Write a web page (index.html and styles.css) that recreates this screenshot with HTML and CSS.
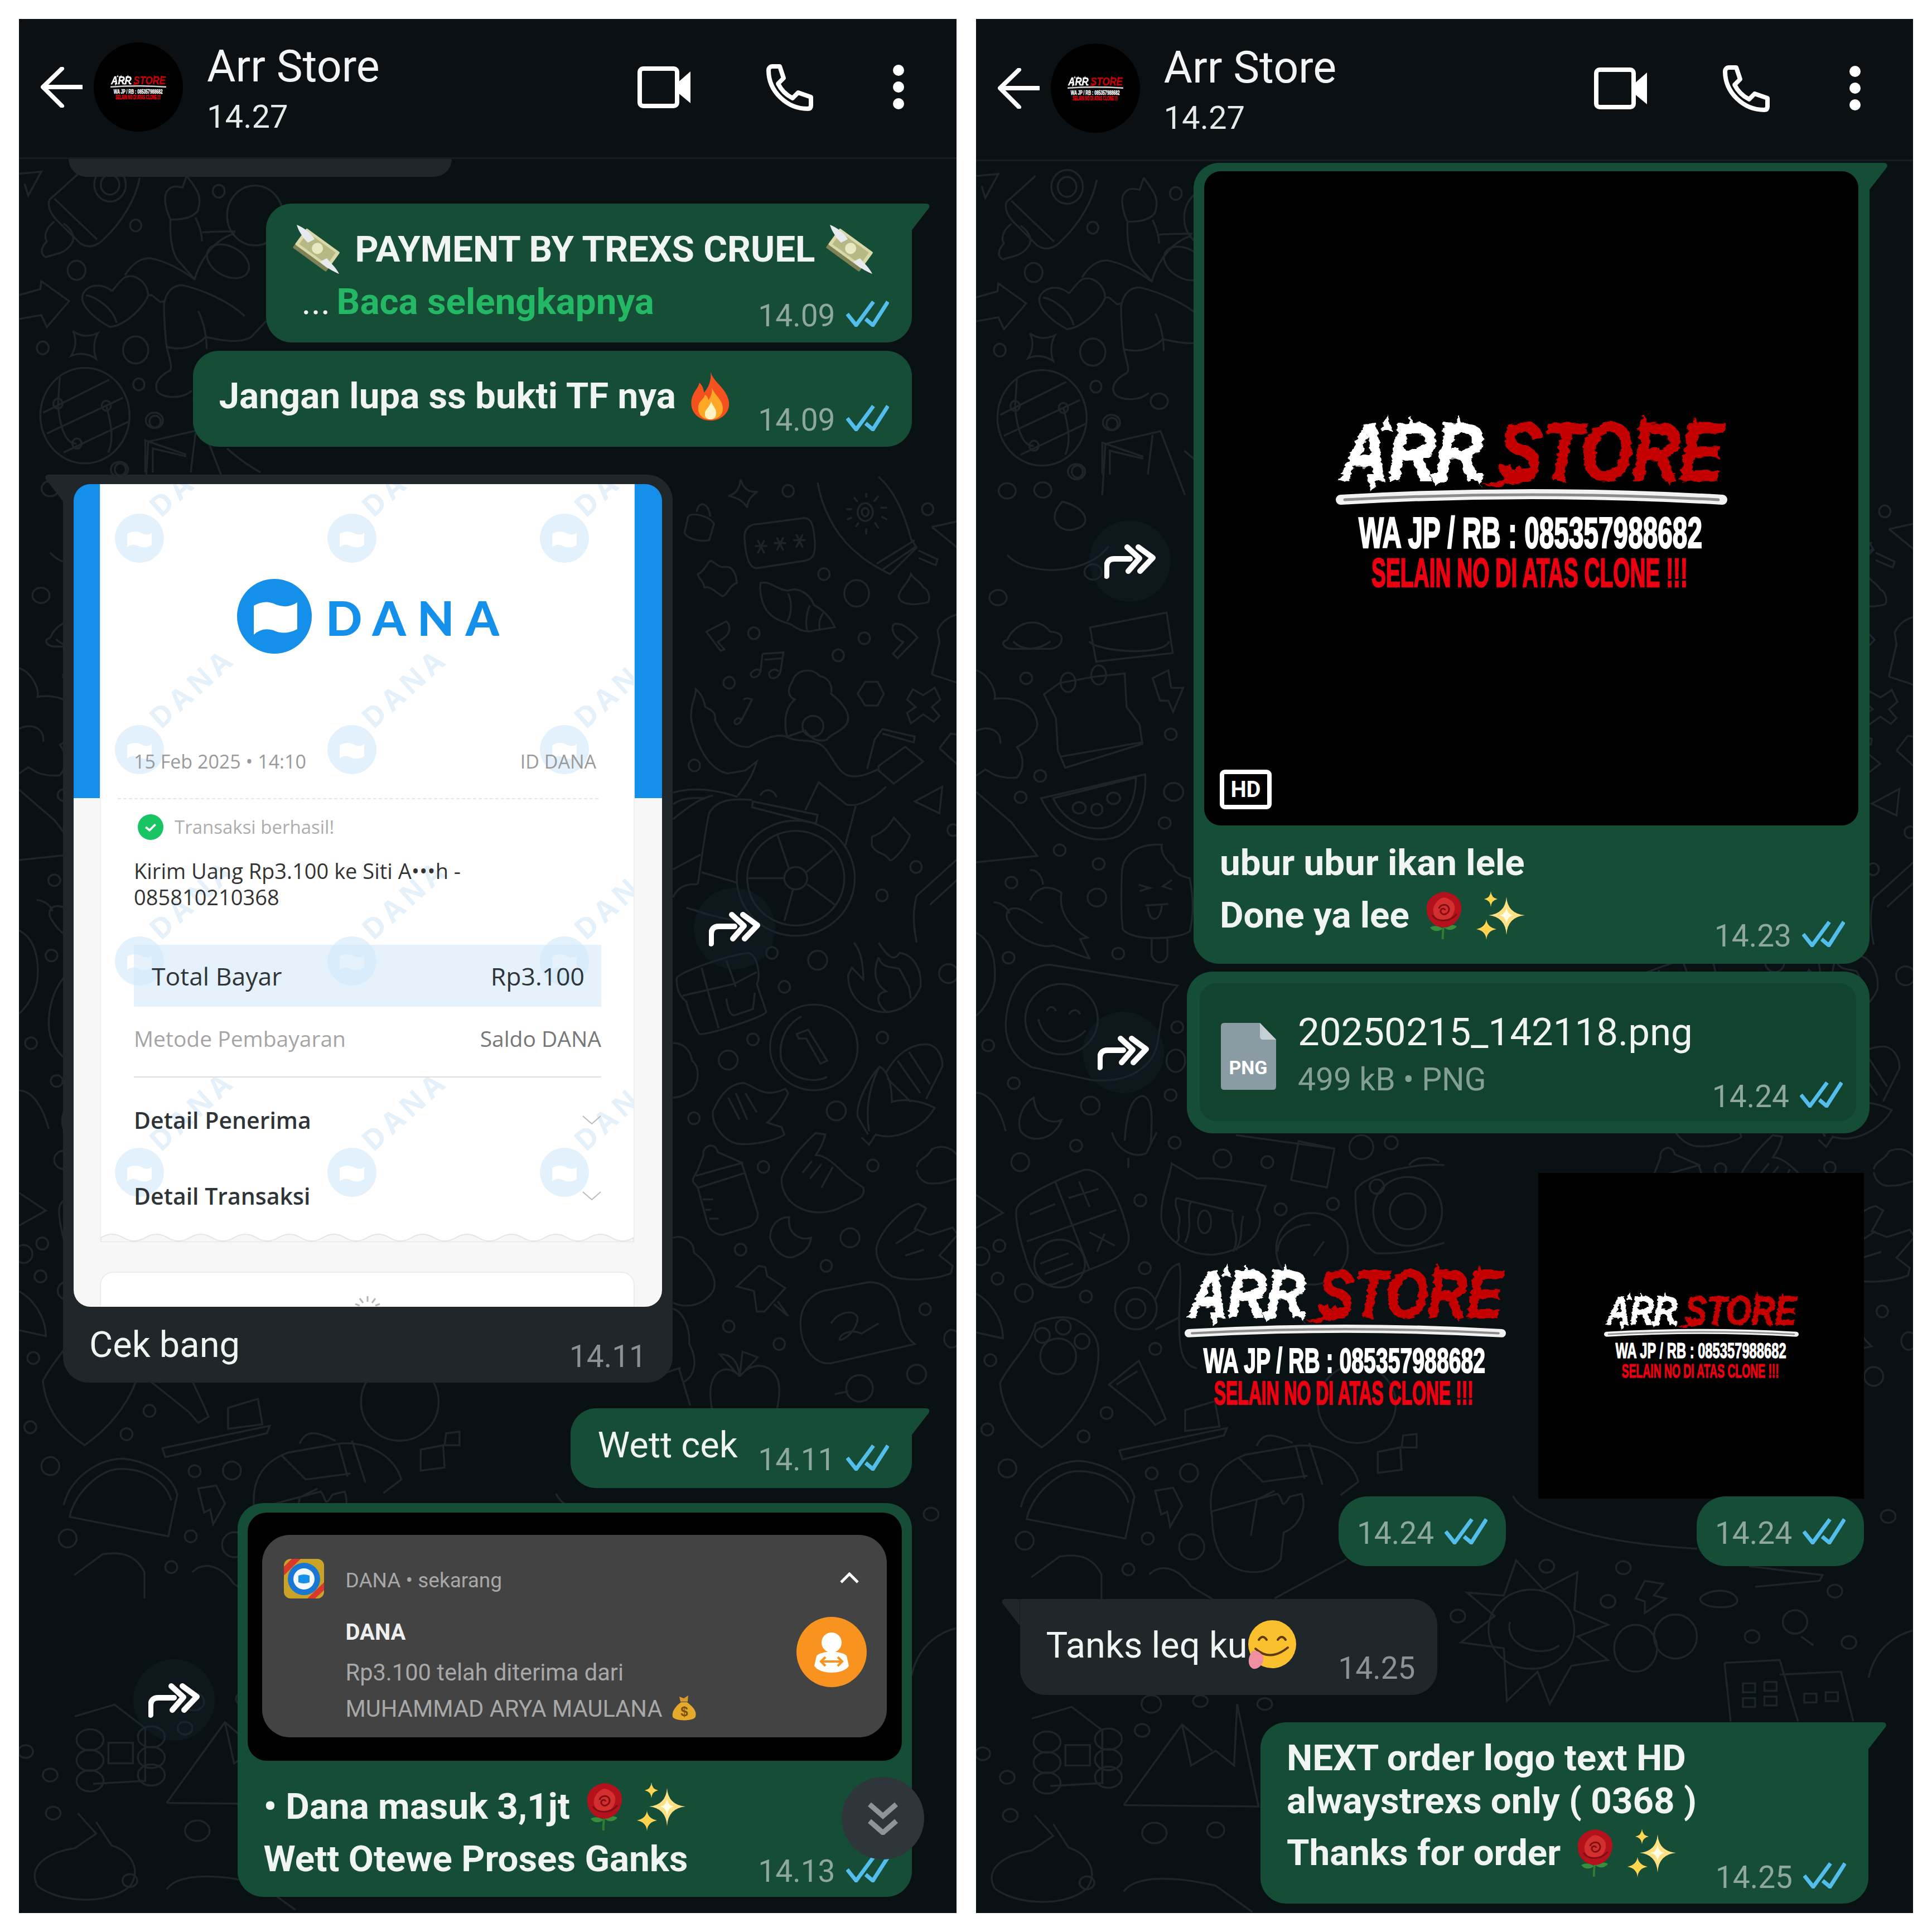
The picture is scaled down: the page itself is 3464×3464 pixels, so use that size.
FILE: index.html
```html
<!DOCTYPE html>
<html lang="en">
<head>
    <meta charset="UTF-8">
    <title>Arr Store - chat</title>
    <link rel="stylesheet" href="styles.css">
</head>
<body>
    <!-- Shared drawings -->
    <svg class="defs" aria-hidden="true">
        <defs>
            <filter id="rough" x="-5%" y="-10%" width="110%" height="120%">
                <feTurbulence type="fractalNoise" baseFrequency="0.05 0.12" numOctaves="2" seed="4"/>
                <feDisplacementMap in="SourceGraphic" scale="13"/>
            </filter>
            <symbol id="arr-logo" viewBox="0 0 702 325">
                <g filter="url(#rough)">
                    <text x="9" y="122" class="lg-white" textLength="255" lengthAdjust="spacingAndGlyphs">ARR</text>
                    <text x="292" y="122" class="lg-red" textLength="403" lengthAdjust="spacingAndGlyphs">STORE</text>
                    <path fill="#fff" stroke="none" d="M82 34L92 3 102 34ZM124 34L134 6 144 34ZM210 34L220 4 230 34ZM54 110L64 145 76 110ZM168 110L179 133 190 110ZM246 110L261 133 264 110Z"/>
                    <path fill="#c40000" stroke="none" d="M542 34L552 2 562 34ZM634 34L644 8 654 34ZM588 110L599 132 610 110ZM262 130C290 128 310 118 330 96L350 122C320 132 290 136 262 130Z"/>
                </g>
                <path d="M9 157Q351 137 693 157" fill="none" stroke="#f2f2f2" stroke-width="18" stroke-linecap="round"/>
                <path d="M16 157Q351 139 686 157" fill="none" stroke="#8c8c8c" stroke-width="5" stroke-linecap="round"/>
                <text x="41" y="243" class="lg-line" textLength="616" lengthAdjust="spacingAndGlyphs">WA JP / RB : 085357988682</text>
                <text x="64" y="313" class="lg-clone" textLength="567" lengthAdjust="spacingAndGlyphs">SELAIN NO DI ATAS CLONE !!!</text>
            </symbol>
            <symbol id="checks" viewBox="0 0 77 47">
                <path d="M2 24L18 44 49 2M35 33L48 44 75 2" fill="none" stroke="#53bdeb" stroke-width="7"/>
            </symbol>
            <symbol id="share" viewBox="0 0 92 63">
                <path d="M4 58V42Q4 27 18 27H46M41 6L63 26 43 49M61 6L87 25 64 49" fill="none" stroke="#fff" stroke-width="10" stroke-linecap="round" stroke-linejoin="round"/>
            </symbol>
            <symbol id="back" viewBox="0 0 75 73">
                <path d="M73 36H5M38 3L4 36 38 70" fill="none" stroke="#fff" stroke-width="8" stroke-linecap="round" stroke-linejoin="round"/>
            </symbol>
            <symbol id="video" viewBox="0 0 95 75">
                <rect x="4" y="4" width="67" height="67" rx="6" fill="none" stroke="#fff" stroke-width="8"/>
                <path d="M71 30L95 9V66L71 46Z" fill="#fff"/>
            </symbol>
            <symbol id="phone" viewBox="0 0 85 85">
                <path d="M5 12C5 50 38 81 75 81 79 81 81 79 81 75V60L58 52 48 62C36 56 28 48 22 36L32 26 25 5H12C8 5 5 8 5 12Z" fill="none" stroke="#fff" stroke-width="8" stroke-linejoin="round"/>
            </symbol>
            <symbol id="dots" viewBox="0 0 22 80">
                <circle cx="11" cy="10" r="10" fill="#fff"/><circle cx="11" cy="40" r="10" fill="#fff"/><circle cx="11" cy="70" r="10" fill="#fff"/>
            </symbol>
            <symbol id="money" viewBox="0 0 93 88">
                <g transform="rotate(36 46 44)">
                    <rect x="9" y="31" width="74" height="36" rx="2" fill="#7f8256"/>
                    <rect x="9" y="24" width="74" height="36" rx="2" fill="#d8d8a8"/>
                    <rect x="15" y="29" width="62" height="26" fill="#b7b984"/>
                    <circle cx="46" cy="42" r="10" fill="#e8e8c2"/>
                </g>
                <path d="M10 0C20 4 36 14 42 26L30 32 24 26C18 18 12 8 10 0Z" fill="#e6eaef"/>
                <path d="M86 88C80 76 72 70 64 60L52 66C58 74 76 84 86 88Z" fill="#e6eaef"/>
            </symbol>
            <symbol id="fire" viewBox="0 0 80 88">
                <path d="M40 0C44 18 66 28 72 50 78 72 60 88 40 88 18 88 2 72 6 50 9 36 18 30 20 20 26 26 28 32 28 38 36 30 42 16 40 0Z" fill="#f4511e"/>
                <path d="M42 28C46 42 62 50 62 66 62 80 52 86 40 86 26 86 16 78 18 62 20 52 28 50 30 42 34 44 36 48 36 52 40 46 44 38 42 28Z" fill="#ffa726"/>
                <path d="M41 54C44 62 50 66 50 74 50 82 46 86 40 86 33 86 29 82 30 74 31 68 38 64 41 54Z" fill="#fff3c4"/>
            </symbol>
            <symbol id="rose" viewBox="0 0 74 85">
                <path d="M37 56C36 66 34 76 35 85" fill="none" stroke="#2e7d32" stroke-width="4"/>
                <path d="M35 66C28 60 18 60 12 64 18 72 28 72 35 66ZM37 64C44 58 54 58 60 62 54 70 44 70 37 64Z" fill="#388e3c"/>
                <path d="M37 0C54 2 70 12 68 32 66 52 50 64 37 64 22 64 6 52 6 32 4 14 20 2 37 0Z" fill="#b3121d"/>
                <path d="M37 10C48 12 58 20 56 32 54 44 46 52 36 52 26 52 16 44 18 30 20 20 28 12 37 10Z" fill="#d32f2f"/>
                <path d="M28 30C30 22 44 20 46 30 47 40 34 44 31 36 30 30 38 28 39 33M16 42C24 54 46 56 60 40" fill="none" stroke="#7f0d14" stroke-width="3"/>
            </symbol>
            <symbol id="sparkles" viewBox="0 0 89 87">
                <path d="M56 10Q58 40 89 43 58 46 56 78 54 46 24 43 54 40 56 10Z" fill="#ffe082"/>
                <path d="M56 28Q57 42 70 43 57 44 56 60 55 44 42 43 55 42 56 28Z" fill="#fffde7"/>
                <path d="M28 0Q29 12 40 14 29 16 28 28 27 16 16 14 27 12 28 0Z" fill="#ffd54f"/>
                <path d="M20 50Q21 64 38 68 21 71 20 87 19 71 2 68 19 64 20 50Z" fill="#ffd54f"/>
            </symbol>
            <symbol id="yum" viewBox="0 0 92 92">
                <circle cx="48" cy="44" r="43" fill="#fbc02d"/>
                <path d="M24 36Q31 26 38 36M58 36Q65 26 72 36" fill="none" stroke="#5d3a12" stroke-width="4" stroke-linecap="round"/>
                <path d="M18 52Q44 76 76 50" fill="none" stroke="#5d3a12" stroke-width="4" stroke-linecap="round"/>
                <path d="M10 60C14 52 26 56 32 66 34 78 24 90 14 88 4 84 4 70 10 60Z" fill="#ef8fa0"/>
            </symbol>
            <symbol id="bag" viewBox="0 0 46 47">
                <path d="M17 12C6 20 0 30 2 38 4 46 40 47 43 38 46 28 38 20 28 12Z" fill="#e5a92b"/>
                <path d="M16 11L14 2 22 5 30 0 29 11Z" fill="#d9982a"/>
                <text x="23" y="37" class="bag-sign">$</text>
            </symbol>
        </defs>
    </svg>

    <!-- Left phone -->
    <section class="phone-shot">
        <header class="top">
            <svg class="ic-back"><use href="#back"/></svg>
            <div class="avatar"><svg class="avatar-logo"><use href="#arr-logo"/></svg></div>
            <div class="who">
                <div class="who-name">Arr Store</div>
                <div class="who-time">14.27</div>
            </div>
            <svg class="ic-video"><use href="#video"/></svg>
            <svg class="ic-phone"><use href="#phone"/></svg>
            <svg class="ic-dots"><use href="#dots"/></svg>
        </header>
        <div class="chat chat-left">
            <svg class="wall" viewBox="34 285 1681 3145" preserveAspectRatio="none">
                <g id="wall-art">
                    <!-- top left corner -->
                    <g transform="translate(34 290) scale(.3333 .357)">
                        <path d="M0 60L120 50 50 170 30 110M320 60L165 190C150 220 170 260 200 290L330 410C380 440 420 420 450 395 560 300 630 180 650 80M190 185L420 390"/>
                        <circle cx="490" cy="115" r="85"/><circle cx="490" cy="115" r="50"/>
                        <path d="M190 300C150 330 130 370 150 400 120 430 110 460 145 480 190 460 250 470 290 400 300 360 270 330 240 310"/>
                        <circle cx="628" cy="320" r="30"/><circle cx="310" cy="545" r="48"/><circle cx="128" cy="935" r="32"/><circle cx="628" cy="945" r="68"/><circle cx="645" cy="1118" r="30"/><circle cx="732" cy="1305" r="30"/><circle cx="1075" cy="148" r="32"/><circle cx="545" cy="1545" r="30"/>
                        <path d="M0 670L115 640 120 600 270 700 150 830 120 770 0 790"/>
                        <path d="M290 850C330 880 380 880 425 860 400 900 400 950 415 990 370 960 320 960 280 975 310 930 310 890 290 850Z"/>
                        <circle cx="355" cy="1275" r="240"/><circle cx="210" cy="1215" r="25"/><circle cx="470" cy="1225" r="25"/><circle cx="312" cy="1415" r="25"/>
                        <path d="M130 1260L485 1095M150 1365L560 1185M240 1460L590 1305M210 1215C220 1350 260 1420 310 1415M220 1080L210 1215M470 1225C500 1330 510 1400 480 1460"/>
                        <path d="M500 650C440 600 350 620 340 680 340 740 430 800 490 830 580 820 680 720 695 670 690 600 620 560 570 580 540 600 520 630 500 650M360 670C420 680 510 740 525 810M570 570C610 510 660 480 710 485 790 500 870 540 945 590 960 540 1020 400 1160 360M695 670L715 670 760 705 780 700M780 720C790 650 830 620 880 620 980 640 1130 700 1215 775M780 700C780 800 790 900 795 930 870 950 950 930 1005 880 1060 890 1180 920 1250 880L1330 800M965 750C990 800 1010 860 1010 940M795 930C810 990 830 1040 810 1050 750 1080 720 1120 750 1160 790 1190 880 1190 930 1150"/>
                        <path d="M815 290C790 240 780 190 790 160 810 120 840 120 880 130 900 80 900 60 910 80 960 140 990 180 960 250 920 290 860 290 815 290M815 290C810 400 830 480 870 510L945 590M950 280C970 320 985 360 985 400M985 355C1040 350 1100 350 1165 350"/>
                        <ellipse cx="1125" cy="500" rx="120" ry="75" transform="rotate(25 1125 500)"/>
                        <circle cx="1270" cy="270" r="150"/>
                        <path d="M680 1560L680 1400 900 1470M720 1560L720 1440 900 1480M950 1360C940 1450 930 1500 925 1560M1120 1440C1180 1490 1240 1530 1300 1560"/>
                    </g>
                    <!-- left column, middle -->
                    <g transform="translate(24 -4) scale(1.0995 .7653)">
                        <path d="M220 1040L310 1010 350 1160M220 1040L215 1160M150 1175C120 1220 150 1250 170 1240 200 1230 190 1190 150 1175M60 1300C90 1350 190 1350 225 1280M195 1470L320 1435 330 1530 205 1550ZM60 1500C70 1460 110 1440 130 1480 160 1480 150 1520 130 1520H70C50 1520 50 1500 60 1500"/>
                        <ellipse cx="60" cy="1150" rx="14" ry="18"/><ellipse cx="118" cy="1148" rx="14" ry="18"/><ellipse cx="173" cy="1105" rx="14" ry="18"/><ellipse cx="230" cy="990" rx="14" ry="18"/><ellipse cx="308" cy="940" rx="14" ry="18"/><ellipse cx="200" cy="1340" rx="14" ry="18"/><ellipse cx="45" cy="1400" rx="14" ry="18"/>
                    </g>
                    <!-- left column, lower -->
                    <g transform="translate(34 1146) scale(.3333 .574)">
                        <path d="M365 165L450 130 640 110 800 100 810 205 880 260 895 320 480 395 440 340 430 240ZM455 360L895 315"/>
                        <ellipse cx="495" cy="128" rx="40" ry="30"/><ellipse cx="660" cy="105" rx="40" ry="30"/>
                        <path d="M950 115L1035 90 1050 145 1115 145 1060 220 1035 185 990 185Z"/>
                        <ellipse cx="270" cy="115" rx="32" ry="18"/><ellipse cx="1048" cy="290" rx="32" ry="18"/><ellipse cx="345" cy="420" rx="32" ry="18"/><ellipse cx="240" cy="487" rx="32" ry="18"/><ellipse cx="1063" cy="470" rx="52" ry="28"/><ellipse cx="1015" cy="567" rx="32" ry="18"/><ellipse cx="450" cy="652" rx="32" ry="18"/><ellipse cx="660" cy="695" rx="32" ry="18"/><ellipse cx="190" cy="753" rx="32" ry="18"/><ellipse cx="650" cy="800" rx="50" ry="28"/><ellipse cx="175" cy="988" rx="32" ry="18"/><ellipse cx="765" cy="975" rx="32" ry="18"/><ellipse cx="1083" cy="1205" rx="32" ry="18"/><ellipse cx="65" cy="1262" rx="32" ry="18"/><ellipse cx="1075" cy="1310" rx="50" ry="35"/><ellipse cx="203" cy="1380" rx="32" ry="18"/><ellipse cx="1047" cy="1417" rx="32" ry="18"/><ellipse cx="615" cy="1450" rx="50" ry="28"/>
                        <path d="M350 490L910 415C920 490 870 580 760 610 610 640 430 590 350 490ZM415 490L860 425C860 500 810 550 730 575 620 600 480 570 415 490Z"/>
                        <ellipse cx="555" cy="520" rx="35" ry="18"/><ellipse cx="650" cy="525" rx="30" ry="18"/><ellipse cx="740" cy="490" rx="35" ry="18"/>
                        <path d="M785 720C790 670 860 630 1000 635 990 660 1030 690 1060 700 1070 730 1120 735 1150 740 1170 800 1170 860 1150 905 1100 930 850 940 790 900 780 860 780 780 785 720ZM945 930V980C960 1010 1020 1010 1030 980V925M875 760L935 770 880 780M1055 745L1005 765 1055 775M910 825L1035 820M925 830C930 880 990 880 1000 825"/>
                        <path d="M290 810C310 780 370 750 460 785 440 850 520 900 600 925L560 930 610 990C540 980 470 960 420 950 340 960 230 930 180 880 140 850 180 820 250 840 290 850 340 880 360 880M290 715C330 710 360 740 360 760M95 815C130 815 170 830 180 850"/>
                        <path d="M160 1200C160 1100 260 1010 400 1010L1085 1075 1010 1130 975 1260C940 1340 800 1380 620 1370L300 1330C200 1300 160 1250 160 1200Z"/>
                        <ellipse cx="460" cy="1180" rx="195" ry="110"/>
                        <path d="M335 1180C370 1260 500 1270 590 1215M380 1155C395 1135 420 1140 430 1155M500 1165C520 1145 550 1150 560 1165"/>
                        <path d="M310 1425C240 1450 220 1500 240 1530 290 1570 420 1560 460 1495 400 1510 320 1490 310 1425ZM800 1560C810 1470 840 1420 900 1420 950 1430 950 1480 940 1568"/>
                        <path d="M0 90C60 100 110 150 100 180 190 170 320 190 330 260 320 300 250 320 220 330 260 360 260 400 220 425 170 430 100 420 80 410L50 400 0 420M0 470L190 565 330 670 0 690M0 280C70 260 140 280 130 320M0 910C70 930 110 980 100 1060 90 1110 40 1150 0 1170M0 1410C70 1410 130 1460 160 1530M200 0C250 30 330 30 400 0M610 0C640 30 1000 50 1040 0"/>
                    </g>
                    <!-- right column, upper -->
                    <g transform="translate(1190 860) scale(.3413 .5293)">
                        <path d="M340 55C380 50 400 30 405 0 420 30 450 45 495 40 460 55 440 75 440 95 420 70 380 60 340 55Z"/>
                        <ellipse cx="655" cy="38" rx="30" ry="20"/><ellipse cx="1388" cy="100" rx="30" ry="20"/><ellipse cx="843" cy="320" rx="30" ry="20"/><ellipse cx="1015" cy="385" rx="65" ry="45"/><ellipse cx="475" cy="520" rx="30" ry="20"/><ellipse cx="1055" cy="537" rx="30" ry="20"/><ellipse cx="918" cy="595" rx="30" ry="20"/><ellipse cx="345" cy="688" rx="30" ry="20"/><ellipse cx="162" cy="968" rx="30" ry="20"/><ellipse cx="1148" cy="1408" rx="30" ry="20"/><ellipse cx="1327" cy="1312" rx="30" ry="20"/><ellipse cx="1522" cy="1187" rx="30" ry="20"/>
                        <path d="M110 180L130 125C140 110 240 120 265 150L240 205C200 210 130 205 110 180ZM175 110C180 70 240 75 245 125"/>
                        <path d="M425 190C430 160 460 150 500 150L740 130C780 130 790 160 795 210 800 260 780 270 740 275L490 300C450 300 430 260 425 190ZM480 225H545M495 205L530 250M530 205L495 250M580 215H645M595 195L630 240M630 195L595 240M682 205H747M697 185L732 230M732 185L697 230"/>
                        <path d="M180 320C220 310 230 275 250 275 280 285 290 300 330 295 370 295 385 330 385 350 340 360 340 390 310 395 280 385 250 360 215 365 210 340 185 340 180 320Z"/>
                        <path d="M510 350C560 340 610 380 660 375 720 360 780 400 790 425 840 440 880 470 900 500L800 510C750 520 710 510 670 490 620 480 560 470 530 430 510 400 505 370 510 350ZM655 385C680 420 670 460 650 480M770 425C750 450 745 490 755 510M840 450C820 470 815 490 820 505"/>
                        <path d="M810 10C830 90 900 190 1020 250 1070 280 1130 300 1190 320L1330 230 1300 200C1260 100 1200 30 1130 -10M1120 285L1320 205M1150 305L1330 225M1340 240L1440 270 1430 290 1340 265"/>
                        <ellipse cx="1060" cy="110" rx="40" ry="30"/><ellipse cx="1060" cy="110" rx="18" ry="14"/>
                        <path d="M960 100H990M1140 95H1175M1000 60L1020 75M1130 55L1105 75M1065 45V60M1065 165V185M1010 160L1025 145M1130 165L1110 145M965 135L990 128M1175 135L1145 125"/>
                        <path d="M1410 160L1553 140M1410 160L1553 235M1300 320C1290 350 1240 370 1235 395 1240 420 1300 430 1390 415 1405 400 1390 370 1365 365 1350 345 1320 340 1300 320Z"/>
                        <path d="M225 515L330 480C355 495 350 520 320 535L285 550 320 575 300 580ZM1210 490C1250 480 1300 510 1335 535L1230 605 1205 590 1260 550C1220 540 1190 510 1210 490Z"/>
                        <path d="M520 590L630 585 615 650C600 680 550 680 555 655 570 640 590 640 605 650M520 590L510 650C490 680 450 670 460 655 480 640 500 640 510 650M530 610L625 605M420 745C440 735 460 745 465 745L410 815C390 835 365 830 375 815 390 805 400 805 410 815"/>
                        <path d="M1020 725L1060 685H1125L1158 725 1125 765H1060ZM1280 745L1310 710 1365 730 1425 705 1455 745 1410 770 1450 800 1420 820 1365 795 1300 825 1280 790 1325 770Z"/>
                        <ellipse cx="695" cy="1350" rx="310" ry="195"/><ellipse cx="695" cy="1350" rx="255" ry="160"/><ellipse cx="695" cy="1350" rx="60" ry="38"/>
                        <path d="M600 1205L660 1320M890 1255L750 1330M445 1350L635 1350M755 1370L900 1440M680 1390L635 1495"/>
                        <path d="M145 810C140 760 170 740 170 710 190 720 210 740 220 770 250 780 280 790 270 815 320 880 380 910 450 905 520 880 590 860 640 870 700 890 760 880 800 890 860 900 880 950 930 985 970 1015 1040 1010 1130 980M145 810C170 900 240 985 340 995L430 985 490 955C470 1000 430 1040 390 1070"/>
                        <path d="M680 680C690 650 770 630 820 665 870 670 890 700 880 725 950 760 990 800 960 830 920 860 880 860 860 880 820 890 770 880 745 850L650 870C630 820 640 770 690 745 640 730 660 700 680 680Z"/>
                        <ellipse cx="785" cy="835" rx="55" ry="35"/>
                        <path d="M1070 980L1110 880 1150 845 1320 870 1315 890 1150 860M1130 970L1270 905 1365 955 1210 1030 1130 985ZM1170 1040C1090 1090 1010 1110 960 1100L815 1025 745 1120M1010 1105L955 1240"/>
                        <path d="M470 1090L810 1135 800 1165 465 1110ZM510 1070C520 1050 570 1040 595 1075M465 1085C380 1080 280 1080 240 1130 220 1180 200 1290 180 1370M200 1330L385 1365M50 1320L195 1270M50 1060C150 1040 280 1050 390 1075M50 1150C110 1120 180 1080 260 1070M50 1100C90 1080 150 1075 220 1080M50 1415C80 1370 140 1370 180 1370M120 1450C180 1460 240 1480 390 1495"/>
                        <path d="M1320 1090L1465 1040 1450 1130ZM1095 1210C1130 1200 1170 1190 1210 1145L1295 1205C1280 1240 1210 1290 1190 1290 1160 1260 1120 1270 1095 1240ZM1553 1280L1330 1410C1310 1460 1310 1500 1330 1568M1553 1350L1400 1440M1410 660L1450 550 1440 510C1470 470 1520 460 1553 455M1410 660L1553 690M1450 910L1510 860 1553 865M1450 910L1553 970"/>
                    </g>
                    <!-- right column, lower -->
                    <g transform="translate(1190 1690) scale(.3413 .5293)">
                        <path d="M70 120C80 100 350 40 450 35 500 50 510 120 490 140L540 235C530 250 260 310 190 310 170 300 130 230 120 200 80 180 65 150 70 120ZM200 85L240 180 290 290M330 60L380 150M100 180L370 140 490 100M330 190C340 240 360 250 380 245L470 225 480 170"/>
                        <ellipse cx="570" cy="35" rx="30" ry="20"/><ellipse cx="810" cy="60" rx="50" ry="32"/><ellipse cx="635" cy="150" rx="30" ry="20"/><ellipse cx="470" cy="328" rx="30" ry="20"/><ellipse cx="340" cy="398" rx="50" ry="32"/><ellipse cx="1150" cy="322" rx="30" ry="20"/><ellipse cx="908" cy="570" rx="50" ry="32"/><ellipse cx="160" cy="595" rx="30" ry="20"/><ellipse cx="1498" cy="105" rx="50" ry="32"/><ellipse cx="525" cy="760" rx="30" ry="20"/><ellipse cx="1100" cy="755" rx="30" ry="20"/><ellipse cx="980" cy="1000" rx="50" ry="32"/><ellipse cx="855" cy="1095" rx="30" ry="20"/><ellipse cx="405" cy="1040" rx="30" ry="20"/><ellipse cx="343" cy="1300" rx="30" ry="20"/><ellipse cx="608" cy="1360" rx="30" ry="20"/><ellipse cx="1375" cy="1242" rx="30" ry="20"/><ellipse cx="1330" cy="1462" rx="50" ry="32"/><ellipse cx="1515" cy="1342" rx="40" ry="30"/>
                        <path d="M1130 0C1170 40 1210 70 1240 35 1310 40 1360 90 1350 150 1320 200 1240 240 1150 235 1060 230 970 190 970 110L990 85 1050 125C1050 80 1040 30 1000 0M1130 50C1150 90 1200 80 1240 90L1290 150 1300 190M1130 50C1100 100 1110 140 1170 165 1120 170 1110 200 1170 235"/>
                        <ellipse cx="790" cy="355" rx="230" ry="145"/>
                        <path d="M725 250C640 280 600 340 620 400 660 460 780 480 860 455M700 310L760 295 860 400 825 410 750 325 710 325Z"/>
                        <path d="M260 570C290 530 330 480 420 475 490 490 530 530 640 495L655 510C620 560 580 590 545 610L620 625 635 650C600 670 450 690 380 680 320 670 250 620 260 570ZM340 525L400 600M380 510L440 600M430 510L490 575"/>
                        <path d="M1040 660L1080 685 1115 650C1210 670 1350 640 1425 560 1340 530 1250 530 1200 540 1200 470 1170 430 1135 420 1080 460 1010 540 1020 590L1075 650M1170 440C1220 380 1300 340 1390 345 1440 350 1470 390 1465 420L1380 530M1230 400L1350 510M1290 370L1400 480M1175 460L1300 540M1135 420C1080 490 1060 560 1080 640"/>
                        <path d="M620 800C640 750 740 680 800 645L850 650C840 680 820 700 800 720 850 720 900 750 960 790L1050 830C1060 860 1030 870 950 890 880 920 780 920 720 900 650 880 620 840 620 800ZM730 780L780 740M770 800L830 750M830 830L890 760"/>
                        <path d="M1120 1030C1150 960 1280 890 1340 885L1380 900 1320 970 1400 990 1520 965 1545 990 1450 1060 1520 1095 1510 1120C1440 1140 1280 1150 1200 1130 1150 1110 1110 1070 1120 1030ZM1220 1020L1340 970M1270 1060L1370 1040"/>
                        <path d="M155 800L180 770 210 720C200 690 270 670 285 710L410 745 495 915C500 940 470 960 440 965L310 990C270 990 240 970 230 950L180 830 155 810ZM170 790L420 745M185 830L430 780M205 870H260M220 905H250M240 935H290"/>
                        <path d="M660 930C600 930 560 960 560 1000 580 1050 650 1080 700 1060 740 1050 770 1030 775 1000 720 1010 650 990 660 930ZM385 1165L500 1095 535 1100 545 1130 640 1170 530 1250 490 1250 475 1180ZM580 1225L655 1265 600 1215"/>
                        <path d="M720 1290C720 1230 780 1180 880 1175L1080 1150C1170 1150 1220 1190 1240 1260 1250 1310 1280 1340 1320 1360L880 1425C780 1430 720 1360 720 1290ZM880 1290C920 1250 1000 1240 1020 1270 1020 1310 950 1350 925 1345 930 1320 1000 1310 1040 1325L1130 1290"/>
                        <path d="M400 1470C350 1430 270 1440 250 1500 240 1530 250 1568 260 1600M400 1470C460 1420 560 1420 600 1480 620 1520 600 1570 590 1600M400 1470L295 1395C350 1395 390 1410 400 1470L415 1385 495 1405 400 1470M900 1530L970 1520"/>
                        <ellipse cx="1030" cy="1510" rx="70" ry="45"/>
                        <path d="M1330 760C1340 730 1390 730 1410 700 1470 680 1530 700 1553 730M1330 770C1340 810 1390 820 1430 815 1470 820 1510 800 1553 800M50 340C100 340 140 360 150 400 190 420 190 470 150 500 120 515 80 525 50 525M50 1000C100 990 160 1010 160 1050 240 1090 300 1150 250 1190 200 1230 120 1240 50 1220M50 1240C100 1250 140 1300 135 1360 180 1410 170 1470 100 1490M80 1440L140 1568M0 1460L90 1440"/>
                    </g>
                    <!-- bottom band -->
                    <g transform="translate(34 2026) scale(.5357)">
                        <circle cx="335" cy="45" r="20"/><circle cx="665" cy="35" r="20"/><circle cx="975" cy="100" r="20"/><circle cx="1390" cy="35" r="22"/><circle cx="148" cy="100" r="30"/><circle cx="825" cy="88" r="30"/><circle cx="1290" cy="50" r="40"/><circle cx="550" cy="228" r="20"/><circle cx="1195" cy="240" r="20"/><circle cx="1020" cy="258" r="20"/><circle cx="78" cy="380" r="20"/><circle cx="72" cy="490" r="20"/><circle cx="565" cy="455" r="20"/><circle cx="160" cy="538" r="30"/><circle cx="368" cy="550" r="20"/><circle cx="600" cy="725" r="20"/><circle cx="48" cy="763" r="20"/><circle cx="38" cy="995" r="20"/><circle cx="360" cy="1018" r="20"/><circle cx="437" cy="940" r="20"/><circle cx="105" cy="1125" r="30"/><circle cx="588" cy="1142" r="20"/><circle cx="713" cy="1140" r="30"/><circle cx="163" cy="1367" r="30"/><circle cx="575" cy="1360" r="20"/><circle cx="722" cy="1388" r="42"/><circle cx="510" cy="1463" r="20"/><circle cx="15" cy="415" r="30"/>
                        <path d="M135 260C140 210 350 125 370 125 430 130 480 210 510 340 520 390 480 420 430 440L280 500C230 530 190 490 170 430 150 370 130 300 135 260ZM265 165L380 460M170 365L470 260M180 275L265 240M345 165L380 250M310 220L410 190M380 335L465 380M430 340L405 400M215 440L310 405M230 475L325 440"/>
                        <ellipse cx="280" cy="440" rx="85" ry="80"/>
                        <path d="M655 105L740 155C800 150 920 170 970 180L940 260C980 330 900 400 790 410 700 410 620 350 620 280 620 210 650 150 655 105ZM670 220C660 260 690 270 680 310 670 340 690 350 670 370M720 230C700 280 730 300 700 370M860 270C850 320 890 340 860 400M895 280C880 320 900 340 870 395M670 220L860 265"/>
                        <ellipse cx="765" cy="300" rx="22" ry="38"/>
                        <path d="M1270 200C1280 150 1450 100 1568 110M1270 200C1270 300 1290 380 1340 405 1420 410 1500 390 1568 370M1450 110C1470 80 1520 80 1550 100"/>
                        <circle cx="1445" cy="265" r="115"/><circle cx="1445" cy="265" r="60"/><circle cx="1342" cy="182" r="24"/>
                        <circle cx="1125" cy="390" r="120"/>
                        <path d="M1130 415L1165 365M1010 400C1010 350 1060 310 1120 310M455 0C470 60 530 90 570 70L605 0M510 85V120M1080 30L1200 55 1175 185 1055 160ZM870 10L1200 55"/>
                        <path d="M80 840C120 760 180 720 200 640 240 620 300 610 340 630 390 660 410 690 410 740 410 850 340 970 220 1055 150 1010 90 940 80 840Z"/>
                        <circle cx="275" cy="750" r="60"/><circle cx="222" cy="680" r="25"/><circle cx="292" cy="652" r="25"/><circle cx="355" cy="700" r="25"/>
                        <circle cx="535" cy="590" r="70"/><circle cx="535" cy="590" r="32"/>
                        <path d="M600 560C630 500 640 450 680 440 690 480 680 560 680 620L600 660M680 620C680 700 680 780 740 790"/>
                        <path d="M445 845L545 765 620 925 635 960 600 980 570 945ZM470 845L540 800M480 1065L840 990 830 1015 490 1095ZM700 930L800 900 815 985 700 1000Z"/>
                        <path d="M790 1290C770 1170 820 1110 900 1080L1070 1050C1180 1040 1260 1100 1280 1170L1220 1215M785 1270L1010 1210C1030 1230 1020 1270 1050 1220L1090 1210C1110 1260 1080 1320 1030 1340L1020 1430C980 1490 880 1480 840 1440 800 1400 790 1340 790 1280M880 1090L960 1170 1110 1150M940 1050C960 1000 1000 1010 1060 1040M1070 1050L1100 1160M1115 1040L1160 1180M920 1350L940 1230 1000 1200"/>
                        <circle cx="1275" cy="910" r="130"/>
                        <path d="M1345 1070L1420 1055 1425 1130 1345 1140ZM1430 1015L1475 1010 1475 1055 1425 1055Z"/>
                        <path d="M150 1255C170 1170 260 1100 350 1100 430 1110 510 1150 530 1220L500 1360 170 1295C180 1230 260 1140 330 1135 410 1130 490 1170 510 1240M600 1200L660 1190 690 1250 650 1320 640 1270 620 1280Z"/>
                        <path d="M580 1480C620 1440 680 1460 720 1520L800 1568M185 1490L280 1420C340 1410 390 1420 420 1480L420 1568M1000 1560L1240 1430M0 540C40 560 90 620 90 690L0 670M0 210L90 270 0 320"/>
                    </g>
                    <!-- bottom rows -->
                    <g transform="translate(24 2636) scale(1.0995 .5255)">
                        <path d="M100 840L165 800 215 880V1060L130 1070M250 1135L345 860 395 950M345 860L360 1000 400 950 430 1000 435 790 470 1140 250 1135M105 1170L135 1240 100 1290C60 1300 20 1350 40 1420 70 1470 150 1490 190 1420 210 1360 190 1300 160 1280L135 1200M250 1430C270 1370 340 1380 400 1410L460 1500"/>
                        <ellipse cx="125" cy="920" rx="22" ry="36"/><ellipse cx="125" cy="990" rx="22" ry="36"/><ellipse cx="125" cy="1060" rx="22" ry="36"/><ellipse cx="225" cy="910" rx="22" ry="36"/><ellipse cx="225" cy="980" rx="22" ry="36"/><ellipse cx="225" cy="1040" rx="22" ry="36"/>
                        <rect x="155" y="930" width="40" height="70"/>
                        <ellipse cx="295" cy="790" rx="16" ry="30"/><ellipse cx="375" cy="780" rx="12" ry="20"/><ellipse cx="480" cy="790" rx="12" ry="20"/><ellipse cx="280" cy="880" rx="12" ry="22"/><ellipse cx="20" cy="960" rx="12" ry="22"/><ellipse cx="60" cy="1040" rx="12" ry="22"/><ellipse cx="65" cy="1170" rx="12" ry="22"/><ellipse cx="300" cy="1230" rx="20" ry="35"/><ellipse cx="190" cy="1400" rx="12" ry="22"/><ellipse cx="400" cy="1220" rx="14" ry="26"/>
                        <path d="M890 300L870 420 810 410 855 490 800 580 870 600 875 780 925 680 945 790 980 660 1040 640 990 560 1040 520 985 470 990 340 935 400ZM880 510C870 590 930 640 960 590"/>
                        <ellipse cx="915" cy="535" rx="70" ry="135"/>
                        <ellipse cx="1085" cy="600" rx="35" ry="80"/><ellipse cx="1150" cy="560" rx="35" ry="75"/>
                        <path d="M1230 650L1320 640 1350 850M1230 650L1240 850M1320 690L1420 680 1440 850M1100 370L1130 380 1115 420 1135 430 1100 480 1100 440 1085 430ZM1190 430C1200 400 1240 390 1250 430 1260 470 1190 470 1190 430"/>
                        <rect x="1260" y="720" width="20" height="30"/><rect x="1295" y="715" width="20" height="30"/><rect x="1260" y="770" width="20" height="30"/><rect x="1295" y="765" width="20" height="30"/><rect x="1360" y="755" width="20" height="30"/><rect x="1395" y="750" width="20" height="30"/>
                        <ellipse cx="1345" cy="510" rx="20" ry="40"/>
                        <path d="M1355 560L1375 590M885 80C900 150 1000 240 1185 260M1270 320L1390 350 1385 370 1280 390"/>
                        <ellipse cx="795" cy="490" rx="12" ry="22"/><ellipse cx="1040" cy="440" rx="12" ry="22"/><ellipse cx="1275" cy="560" rx="12" ry="22"/><ellipse cx="1433" cy="580" rx="12" ry="22"/><ellipse cx="940" cy="320" rx="12" ry="22"/><ellipse cx="1065" cy="325" rx="12" ry="22"/><ellipse cx="1410" cy="405" rx="12" ry="22"/><ellipse cx="1497" cy="150" rx="12" ry="22"/>
                        <path d="M1465 700C1480 560 1537 540 1537 540"/>
                    </g>
                </g>
            </svg>

            <div class="stub"></div>

            <div class="row mt-48">
                <div class="msg out tail-r w-pay stack">
                    <div class="pay-body text">
                        <div class="line">
                            <svg class="emo-money"><use href="#money"/></svg>
                            <span class="pay-title">PAYMENT BY TREXS CRUEL</span>
                            <svg class="emo-money"><use href="#money"/></svg>
                        </div>
                        <div class="pay-more"><span class="dots-more">...</span> <span class="link">Baca selengkapnya</span></div>
                    </div>
                    <div class="meta"><span>14.09</span><svg class="check"><use href="#checks"/></svg></div>
                </div>
            </div>

            <div class="row mt-15">
                <div class="msg out w-tf stack">
                    <div class="tf-body text line">
                        <span>Jangan lupa ss bukti TF nya</span>
                        <svg class="emo-fire"><use href="#fire"/></svg>
                    </div>
                    <div class="meta"><span>14.09</span><svg class="check"><use href="#checks"/></svg></div>
                </div>
            </div>

            <div class="row row-start row-mid mt-50">
                <div class="msg in tail-l w-cek">
                    <div class="receipt">
                        <div class="rc-card">
                            <svg class="rc-marks">
                                <defs>
                                    <pattern id="dana-mark" x="-51" y="-83" width="381" height="379" patternUnits="userSpaceOnUse">
                                        <circle cx="120" cy="180" r="44" fill="#e2f1fc"/>
                                        <path d="M98 172Q112 164 126 172 136 176 142 170V192Q130 200 118 194 108 188 98 196Z" fill="#fff"/>
                                        <text x="158" y="145" class="rc-mark-text" transform="rotate(-42 158 145)">DANA</text>
                                    </pattern>
                                </defs>
                                <rect width="959" height="1359" fill="url(#dana-mark)"/>
                            </svg>
                            <svg class="rc-logo" viewBox="0 0 470 135">
                                <circle cx="67" cy="67" r="67" fill="#1590ea"/>
                                <path d="M30 48Q50 36 70 46 90 54 108 42V90Q85 102 65 92 45 86 30 100Z" fill="#fff"/>
                                <text x="159" y="102" class="rc-logo-text" textLength="311" lengthAdjust="spacing">DANA</text>
                            </svg>
                            <div class="rc-date"><span>15 Feb 2025 • 14:10</span><span>ID DANA</span></div>
                            <div class="rc-dash"></div>
                            <div class="rc-status">
                                <svg class="rc-ok" viewBox="0 0 48 48"><circle cx="24" cy="24" r="24" fill="#19c463"/><path d="M15 24L22 30 33 19" fill="none" stroke="#fff" stroke-width="4"/></svg>
                                <span>Transaksi berhasil!</span>
                            </div>
                            <div class="rc-title">Kirim Uang Rp3.100 ke Siti A•••h -<br>085810210368</div>
                            <div class="rc-total"><span>Total Bayar</span><span>Rp3.100</span></div>
                            <div class="rc-row rc-method"><span>Metode Pembayaran</span><span class="rc-method-val">Saldo DANA</span></div>
                            <div class="rc-rule"></div>
                            <div class="rc-row rc-detail">
                                <span>Detail Penerima</span>
                                <svg class="rc-chev" viewBox="0 0 34 18"><path d="M1 2L17 16 33 2" fill="none" stroke="#bbb" stroke-width="2"/></svg>
                            </div>
                            <div class="rc-row rc-detail rc-detail-b">
                                <span>Detail Transaksi</span>
                                <svg class="rc-chev" viewBox="0 0 34 18"><path d="M1 2L17 16 33 2" fill="none" stroke="#bbb" stroke-width="2"/></svg>
                            </div>
                            <svg class="rc-wave" viewBox="0 0 960 16" preserveAspectRatio="none">
                                <path d="M0 8q20-12 40 0t40 0t40 0t40 0t40 0t40 0t40 0t40 0t40 0t40 0t40 0t40 0t40 0t40 0t40 0t40 0t40 0t40 0t40 0t40 0t40 0t40 0t40 0t40 0V16H0Z" fill="#f7f7f7" stroke="#e4e4e4" stroke-width="2"/>
                            </svg>
                        </div>
                        <div class="rc-next">
                            <svg class="rc-spin" viewBox="0 0 48 22"><path d="M24 2V12M10 6L16 14M38 6L32 14M2 16L10 19M46 16L38 19" fill="none" stroke="#b5b5b5" stroke-width="3"/></svg>
                        </div>
                    </div>
                    <div class="foot-cek stack">
                        <div class="caption">Cek bang</div>
                        <div class="meta meta-in"><span>14.11</span></div>
                    </div>
                </div>
                <div class="share share-cek"><svg class="share-ic"><use href="#share"/></svg></div>
            </div>

            <div class="row mt-46">
                <div class="msg out tail-r w-wett stack">
                    <div class="caption wett-body">Wett cek</div>
                    <div class="meta"><span>14.11</span><svg class="check"><use href="#checks"/></svg></div>
                </div>
            </div>

            <div class="row row-mid mt-27">
                <div class="share share-dana"><svg class="share-ic"><use href="#share"/></svg></div>
                <div class="msg out w-dana">
                    <div class="shot">
                        <div class="notif">
                            <svg class="nf-app" viewBox="0 0 72 71">
                                <rect width="72" height="71" rx="12" fill="#c9a227"/>
                                <path d="M0 14L14 0H30L0 30ZM72 56L56 71H42L72 42Z" fill="#d8392b"/>
                                <circle cx="36" cy="36" r="29" fill="#1976d2"/>
                                <circle cx="36" cy="36" r="19" fill="#f3f8fc"/>
                                <path d="M26 30Q36 26 46 30V42Q36 46 26 42Z" fill="#1590ea"/>
                            </svg>
                            <div class="nf-text">
                                <div class="nf-head">DANA • sekarang</div>
                                <div class="nf-title">DANA</div>
                                <div class="nf-body">Rp3.100 telah diterima dari</div>
                                <div class="nf-body nf-line"><span>MUHAMMAD ARYA MAULANA</span><svg class="emo-bag"><use href="#bag"/></svg></div>
                            </div>
                            <div class="nf-side">
                                <svg class="nf-chev" viewBox="0 0 36 20"><path d="M3 18L18 3 33 18" fill="none" stroke="#fff" stroke-width="5"/></svg>
                                <svg class="nf-pic" viewBox="0 0 126 126">
                                    <circle cx="63" cy="63" r="63" fill="#f7931e"/>
                                    <circle cx="63" cy="46" r="18" fill="#fff"/>
                                    <path d="M36 70C44 60 82 60 90 70L94 88C84 104 42 104 32 88Z" fill="#fff"/>
                                    <path d="M44 80H82M52 72L44 80 52 88M74 72L82 80 74 88" fill="none" stroke="#f7931e" stroke-width="4"/>
                                </svg>
                            </div>
                        </div>
                    </div>
                    <div class="foot-dana stack">
                        <div class="text">
                            <div class="line"><span>• Dana masuk 3,1jt</span><svg class="emo-rose"><use href="#rose"/></svg><svg class="emo-spark"><use href="#sparkles"/></svg></div>
                            <div>Wett Otewe Proses Ganks</div>
                        </div>
                        <div class="meta"><span>14.13</span><svg class="check"><use href="#checks"/></svg></div>
                    </div>
                </div>
            </div>

            <div class="scroll-down">
                <svg viewBox="0 0 54 59"><path d="M3 4L27 25 51 4M3 34L27 55 51 34" fill="none" stroke="#8d959b" stroke-width="9"/></svg>
            </div>
        </div>
    </section>

    <!-- Right phone -->
    <section class="phone-shot">
        <header class="top top-tall">
            <svg class="ic-back"><use href="#back"/></svg>
            <div class="avatar"><svg class="avatar-logo"><use href="#arr-logo"/></svg></div>
            <div class="who">
                <div class="who-name">Arr Store</div>
                <div class="who-time">14.27</div>
            </div>
            <svg class="ic-video"><use href="#video"/></svg>
            <svg class="ic-phone"><use href="#phone"/></svg>
            <svg class="ic-dots"><use href="#dots"/></svg>
        </header>
        <div class="chat chat-right">
            <svg class="wall" viewBox="34 285 1681 3141" preserveAspectRatio="none"><use href="#wall-art"/></svg>

            <div class="row row-mid mt-3">
                <div class="share share-main"><svg class="share-ic"><use href="#share"/></svg></div>
                <div class="msg out tail-r w-main">
                    <div class="photo">
                        <svg class="photo-logo"><use href="#arr-logo"/></svg>
                        <div class="hd">HD</div>
                    </div>
                    <div class="foot-main stack">
                        <div class="text">
                            <div>ubur ubur ikan lele</div>
                            <div class="line"><span>Done ya lee</span><svg class="emo-rose"><use href="#rose"/></svg><svg class="emo-spark"><use href="#sparkles"/></svg></div>
                        </div>
                        <div class="meta"><span>14.23</span><svg class="check"><use href="#checks"/></svg></div>
                    </div>
                </div>
            </div>

            <div class="row row-mid mt-14">
                <div class="share share-file"><svg class="share-ic"><use href="#share"/></svg></div>
                <div class="msg out w-file">
                    <div class="file stack">
                        <div class="file-row">
                            <svg class="file-ic" viewBox="0 0 99 120">
                                <path d="M6 0H70L99 30V114Q99 120 93 120H6Q0 120 0 114V6Q0 0 6 0Z" fill="#8a9ba3"/>
                                <path d="M70 0L99 30H76Q70 30 70 24Z" fill="#c4ced3"/>
                                <text x="49" y="92" class="file-ic-text">PNG</text>
                            </svg>
                            <div>
                                <div class="file-name">20250215_142118.png</div>
                                <div class="file-sub">499 kB • PNG</div>
                            </div>
                        </div>
                        <div class="meta"><span>14.24</span><svg class="check"><use href="#checks"/></svg></div>
                    </div>
                </div>
            </div>

            <div class="stickers">
                <div class="sticker-col">
                    <div class="sticker"><svg class="sticker-logo"><use href="#arr-logo"/></svg></div>
                    <div class="pill"><div class="meta"><span>14.24</span><svg class="check"><use href="#checks"/></svg></div></div>
                </div>
                <div class="sticker-col">
                    <div class="sticker sticker-black"><svg class="sticker-logo-sm"><use href="#arr-logo"/></svg></div>
                    <div class="pill"><div class="meta"><span>14.24</span><svg class="check"><use href="#checks"/></svg></div></div>
                </div>
            </div>

            <div class="row row-start mt-59">
                <div class="msg in tail-l w-tanks stack">
                    <div class="caption line tanks-body"><span>Tanks leq ku</span><svg class="emo-yum"><use href="#yum"/></svg></div>
                    <div class="meta meta-in"><span>14.25</span></div>
                </div>
            </div>

            <div class="row mt-49">
                <div class="msg out tail-r w-next stack">
                    <div class="text next-body">
                        <div class="next-top">NEXT order logo text HD<br>alwaystrexs only ( 0368 )</div>
                        <div class="line"><span>Thanks for order</span><svg class="emo-rose"><use href="#rose"/></svg><svg class="emo-spark"><use href="#sparkles"/></svg></div>
                    </div>
                    <div class="meta"><span>14.25</span><svg class="check"><use href="#checks"/></svg></div>
                </div>
            </div>
        </div>
    </section>
</body>
</html>
```

FILE: styles.css
```css
/* General Styles */
body {
    margin: 0;
    width: 3464px;
    height: 3464px;
    box-sizing: border-box;
    padding: 34px;
    display: flex;
    gap: 35px;
    background: #fff;
    font-family: Roboto, "Liberation Sans", sans-serif;
    overflow: hidden;
}

.defs {
    position: absolute;
    width: 0;
    height: 0;
}

.phone-shot {
    width: 1681px;
    height: 3396px;
    display: flex;
    flex-direction: column;
    background: #0a1114;
}

/* Header */
.top {
    height: 251px;
    box-sizing: border-box;
    flex: none;
    display: flex;
    align-items: center;
    padding: 0 93px 4px 39px;
    background: #0b1014;
    border-bottom: 3px solid #171e22;
    color: #fff;
}

.top-tall {
    height: 255px;
}

.ic-back {
    width: 75px;
    height: 73px;
}

.avatar {
    width: 160px;
    height: 160px;
    margin-left: 20px;
    border-radius: 50%;
    background: #000;
    display: flex;
    align-items: center;
    justify-content: center;
}

.avatar-logo {
    width: 100px;
    height: 47px;
}

.who {
    flex: 1;
    margin-left: 43px;
}

.who-name {
    font-size: 79px;
    line-height: 90px;
    color: #f2f4f5;
}

.who-time {
    font-size: 58px;
    line-height: 60px;
    margin-top: 15px;
    color: #e6e9ea;
}

.ic-video {
    width: 95px;
    height: 75px;
}

.ic-phone {
    width: 85px;
    height: 85px;
    margin-left: 135px;
}

.ic-dots {
    width: 22px;
    height: 80px;
    margin-left: 142px;
}

/* Chat area */
.chat {
    position: relative;
    flex: 1;
    overflow: hidden;
    padding-right: 80px;
    padding-left: 79px;
}

.chat-right {
    padding-right: 78px;
}

.wall {
    position: absolute;
    left: 0;
    top: 0;
    width: 100%;
    height: 100%;
    fill: none;
    stroke: #1d252a;
    stroke-width: 3.5;
}

.wall * {
    vector-effect: non-scaling-stroke;
}

.row {
    position: relative;
    display: flex;
    justify-content: flex-end;
}

.row-start {
    justify-content: flex-start;
}

.row-mid {
    align-items: center;
}

.mt-3 { margin-top: 3px; }
.mt-14 { margin-top: 14px; }
.mt-15 { margin-top: 15px; }
.mt-27 { margin-top: 27px; }
.mt-46 { margin-top: 46px; }
.mt-48 { margin-top: 48px; }
.mt-49 { margin-top: 49px; }
.mt-50 { margin-top: 50px; }
.mt-59 { margin-top: 59px; }

.stub {
    position: relative;
    width: 687px;
    height: 32px;
    margin-left: 10px;
    background: #1f272b;
    border-radius: 0 0 46px 46px;
}

/* Bubbles */
.msg {
    position: relative;
    border-radius: 46px;
    color: #f0f4f2;
}

.out {
    background: #154d37;
}

.in {
    background: #1f272b;
}

.tail-r {
    border-top-right-radius: 0;
}

.tail-r::after {
    content: "";
    position: absolute;
    top: 0;
    left: 100%;
    width: 33px;
    height: 48px;
    background: inherit;
    clip-path: path("M0 0H25Q34 0 31 8L0 48Z");
}

.tail-l {
    border-top-left-radius: 0;
}

.tail-l::before {
    content: "";
    position: absolute;
    top: 0;
    right: 100%;
    width: 33px;
    height: 48px;
    background: inherit;
    clip-path: path("M33 0H8Q-1 0 2 8L33 48Z");
}

.stack {
    display: grid;
}

.stack > * {
    grid-area: 1 / 1;
}

.text {
    font-size: 65.5px;
    font-weight: 700;
    line-height: 94px;
}

.caption {
    font-size: 65px;
    line-height: 80px;
}

.line {
    display: flex;
    align-items: center;
}

.meta {
    display: flex;
    align-items: flex-end;
    justify-self: end;
    align-self: end;
    gap: 19px;
    margin: 0 41px 28px 0;
    font-size: 55px;
    line-height: 40px;
    color: #8fa89f;
}

.meta-in {
    color: #8b9296;
    margin: 0 28px 27px 0;
}

.check {
    width: 77px;
    height: 47px;
}

/* Emoji */
.emo-money {
    width: 93px;
    height: 88px;
    flex: none;
}

.emo-fire {
    width: 80px;
    height: 88px;
    margin-left: 22px;
}

.emo-rose {
    width: 74px;
    height: 85px;
    margin-left: 25px;
}

.emo-spark {
    width: 89px;
    height: 87px;
    margin-left: 19px;
}

.emo-yum {
    width: 92px;
    height: 92px;
    margin-left: -4px;
}

.emo-bag {
    width: 46px;
    height: 47px;
    margin-left: 16px;
}

.bag-sign {
    font: 700 24px "Liberation Sans", sans-serif;
    text-anchor: middle;
    fill: #7a4d10;
}

/* Payment message */
.w-pay {
    width: 1158px;
}

.pay-body {
    padding: 35px 0 26px 45px;
}

.pay-title {
    margin: 0 17px 0 22px;
}

.pay-more {
    padding-left: 19px;
}

.dots-more {
    font-weight: 400;
    margin-right: -5px;
}

.link {
    color: #25b864;
}

.w-tf {
    width: 1289px;
}

.tf-body {
    padding: 34px 0 44px 47px;
}

/* Receipt screenshot */
.w-cek {
    width: 1093px;
    box-sizing: border-box;
    padding: 17px 19px 0;
}

.receipt {
    height: 1475px;
    overflow: hidden;
    border-radius: 30px;
    padding: 0 49px 0 47px;
    background: linear-gradient(#1590ea, #1590ea) 0 0 / 100% 563px no-repeat #f7f7f7;
    font-family: "Open Sans", sans-serif;
}

.rc-card {
    position: relative;
    height: 1359px;
    padding-top: 170px;
    box-sizing: border-box;
    background: #fff;
    border-left: 2px solid #efefef;
    border-right: 2px solid #efefef;
    overflow: hidden;
}

.rc-marks {
    position: absolute;
    left: 0;
    top: 0;
    width: 959px;
    height: 1359px;
}

.rc-mark-text {
    font: 700 52px "Open Sans", sans-serif;
    letter-spacing: 8px;
    fill: #e4f1fb;
}

.rc-logo {
    position: relative;
    display: block;
    width: 470px;
    height: 135px;
    margin-left: 244px;
}

.rc-logo-text {
    font: 900 86px "Lato", sans-serif;
    fill: #1590ea;
}

.rc-date,
.rc-status,
.rc-title,
.rc-total,
.rc-row,
.rc-dash,
.rc-rule {
    position: relative;
}

.rc-date {
    display: flex;
    justify-content: space-between;
    margin: 172px 67px 0 59px;
    font-size: 34px;
    line-height: 40px;
    color: #9a9a9a;
}

.rc-dash {
    margin: 46px 63px 0 30px;
    border-top: 2px dashed #e6e6e6;
}

.rc-status {
    display: flex;
    align-items: center;
    margin: 27px 0 0 65px;
    font-size: 33px;
    line-height: 46px;
    color: #adadad;
}

.rc-ok {
    width: 48px;
    height: 46px;
    margin-right: 19px;
}

.rc-title {
    margin: 32px 0 0 59px;
    font-size: 38px;
    line-height: 47px;
    color: #333;
}

.rc-total {
    display: flex;
    align-items: center;
    justify-content: space-between;
    height: 111px;
    margin: 62px 58px 0 59px;
    padding: 0 30px 0 32px;
    background: rgba(207, 231, 250, 0.55);
    font-size: 44.5px;
    color: #2f3438;
}

.rc-row {
    display: flex;
    align-items: center;
    justify-content: space-between;
    margin: 0 58px 0 59px;
}

.rc-method {
    margin-top: 32px;
    font-size: 39px;
    line-height: 50px;
    color: #a5a5a5;
}

.rc-method-val {
    color: #777;
}

.rc-rule {
    margin: 43px 58px 0 59px;
    border-top: 2px solid #dfdfdf;
}

.rc-detail {
    margin-top: 51px;
    font-size: 41px;
    font-weight: 600;
    line-height: 50px;
    color: #2f3438;
}

.rc-detail-b {
    margin-top: 86px;
}

.rc-chev {
    width: 34px;
    height: 18px;
}

.rc-wave {
    position: absolute;
    left: 0;
    bottom: 0;
    width: 100%;
    height: 16px;
}

.rc-next {
    height: 70px;
    margin-top: 53px;
    background: #fff;
    border: 2px solid #ececec;
    border-radius: 24px 24px 0 0;
    text-align: center;
}

.rc-spin {
    width: 48px;
    height: 22px;
    margin-top: 40px;
}

.foot-cek {
    height: 136px;
}

.foot-cek .caption {
    padding: 28px 0 0 28px;
}

.share {
    flex: none;
    width: 146px;
    height: 146px;
    border-radius: 50%;
    background: rgba(24, 34, 42, 0.35);
    display: flex;
    align-items: center;
    justify-content: center;
}

.share-ic {
    width: 92px;
    height: 63px;
}

.share-cek {
    margin-left: 38px;
}

.share-dana {
    margin-right: 41px;
}

.share-main,
.share-file {
    margin-right: 41px;
}

.share-main {
    margin-bottom: 8px;
}

.w-wett {
    width: 612px;
}

.wett-body {
    padding: 26px 0 37px 49px;
}

.w-wett .meta {
    margin-bottom: 31px;
}

/* Notification screenshot */
.w-dana {
    width: 1209px;
    box-sizing: border-box;
    padding: 17px 18px 0;
}

.shot {
    height: 445px;
    box-sizing: border-box;
    padding: 40px 27px 42px 26px;
    background: #000;
    border-radius: 34px;
}

.notif {
    height: 363px;
    box-sizing: border-box;
    display: flex;
    padding: 0 36px 0 39px;
    background: #434343;
    border-radius: 50px;
}

.nf-app {
    width: 72px;
    height: 71px;
    margin-top: 43px;
    flex: none;
}

.nf-text {
    flex: 1;
    margin-left: 39px;
    padding-top: 57px;
    color: #a8a8a8;
}

.nf-head {
    font-size: 37px;
    line-height: 50px;
}

.nf-title {
    margin-top: 43px;
    font-size: 40px;
    font-weight: 700;
    line-height: 50px;
    color: #eee;
}

.nf-body {
    font-size: 41.6px;
    line-height: 65px;
}

.nf-title + .nf-body {
    margin-top: 14px;
}

.nf-line {
    display: flex;
    align-items: center;
}

.nf-side {
    display: flex;
    flex-direction: column;
    align-items: flex-end;
}

.nf-chev {
    width: 36px;
    height: 20px;
    margin: 67px 13px 0 0;
}

.nf-pic {
    width: 126px;
    height: 126px;
    margin-top: 60px;
}

.foot-dana .text {
    padding: 35px 0 21px 29px;
}

.foot-dana .meta {
    margin: 0 23px 26px 0;
}

.scroll-down {
    position: absolute;
    right: 58px;
    bottom: 96px;
    width: 148px;
    height: 148px;
    border-radius: 50%;
    background: #2e363b;
    display: flex;
    align-items: center;
    justify-content: center;
}

.scroll-down svg {
    width: 54px;
    height: 59px;
}

/* Right phone */
.w-main {
    width: 1212px;
    box-sizing: border-box;
    padding: 15px 20px 0 19px;
}

.photo {
    position: relative;
    height: 1173px;
    background: #000;
    border-radius: 30px;
    display: flex;
    align-items: center;
    justify-content: center;
}

.photo-logo {
    width: 702px;
    height: 325px;
    margin-top: 16px;
}

.hd {
    position: absolute;
    left: 28px;
    bottom: 29px;
    width: 93px;
    height: 71px;
    box-sizing: border-box;
    border: 8px solid #fff;
    border-radius: 9px;
    background: #000;
    color: #fff;
    font-size: 40px;
    font-weight: 700;
    line-height: 55px;
    text-align: center;
}

.foot-main .text {
    padding: 20px 0 40px 28px;
}

.foot-main .meta {
    margin: 0 24px 30px 0;
}

.w-file {
    width: 1224px;
    box-sizing: border-box;
    padding: 21px 24px 22px 23px;
}

.file {
    height: 247px;
    border-radius: 30px;
    background: #12432f;
}

.file-row {
    display: flex;
    align-items: flex-start;
    padding: 48px 0 0 38px;
}

.file-ic {
    width: 99px;
    height: 120px;
    margin: 23px 39px 0 0;
    flex: none;
}

.file-ic-text {
    font: 700 34px Roboto, sans-serif;
    text-anchor: middle;
    fill: #fff;
}

.file-name {
    font-size: 69px;
    line-height: 80px;
}

.file-sub {
    margin-top: 10px;
    font-size: 57px;
    line-height: 70px;
    color: #83a093;
}

.file .meta {
    margin: 0 24px 24px 0;
}

.stickers {
    position: relative;
    display: flex;
    justify-content: flex-end;
    gap: 58px;
    margin: 71px 10px 0 0;
}

.sticker-col {
    width: 584px;
    display: flex;
    flex-direction: column;
    align-items: flex-end;
}

.sticker {
    width: 584px;
    height: 584px;
    display: flex;
    align-items: center;
    justify-content: center;
}

.sticker-black {
    background: #000;
}

.sticker-logo {
    width: 580px;
    height: 268px;
    margin-left: 8px;
}

.sticker-logo-sm {
    width: 349px;
    height: 162px;
}

.pill {
    width: 300px;
    height: 125px;
    margin-top: -4px;
    box-sizing: border-box;
    border-radius: 52px;
    background: #154d37;
    display: flex;
    align-items: center;
    justify-content: center;
}

.pill .meta {
    margin: 0;
    align-self: center;
}

.w-tanks {
    width: 748px;
}

.tanks-body {
    padding: 37px 0 43px 47px;
    font-size: 65px;
    line-height: 92px;
}

.w-tanks .meta {
    margin: 0 39px 28px 0;
}

.w-next {
    width: 1090px;
    margin-right: 2px;
}

.next-body {
    padding: 25px 0 44px 47px;
}

.next-top {
    line-height: 77px;
    margin-bottom: 8px;
}

.w-next .meta {
    margin: 0 40px 27px 0;
}

/* Logo lettering */
.lg-white,
.lg-red {
    font: italic 700 146px "Liberation Sans", sans-serif;
}

.lg-white {
    fill: #fff;
    stroke: #fff;
    stroke-width: 3px;
}

.lg-red {
    fill: #c40000;
    stroke: #c40000;
    stroke-width: 3px;
}

.lg-line,
.lg-clone {
    font-family: "Liberation Sans", sans-serif;
    font-weight: 700;
}

.lg-line {
    font-size: 77px;
    fill: #fff;
    stroke: #fff;
    stroke-width: 2.5px;
}

.lg-clone {
    font-size: 72px;
    fill: #ea0010;
    stroke: #ea0010;
    stroke-width: 2.5px;
}
```
